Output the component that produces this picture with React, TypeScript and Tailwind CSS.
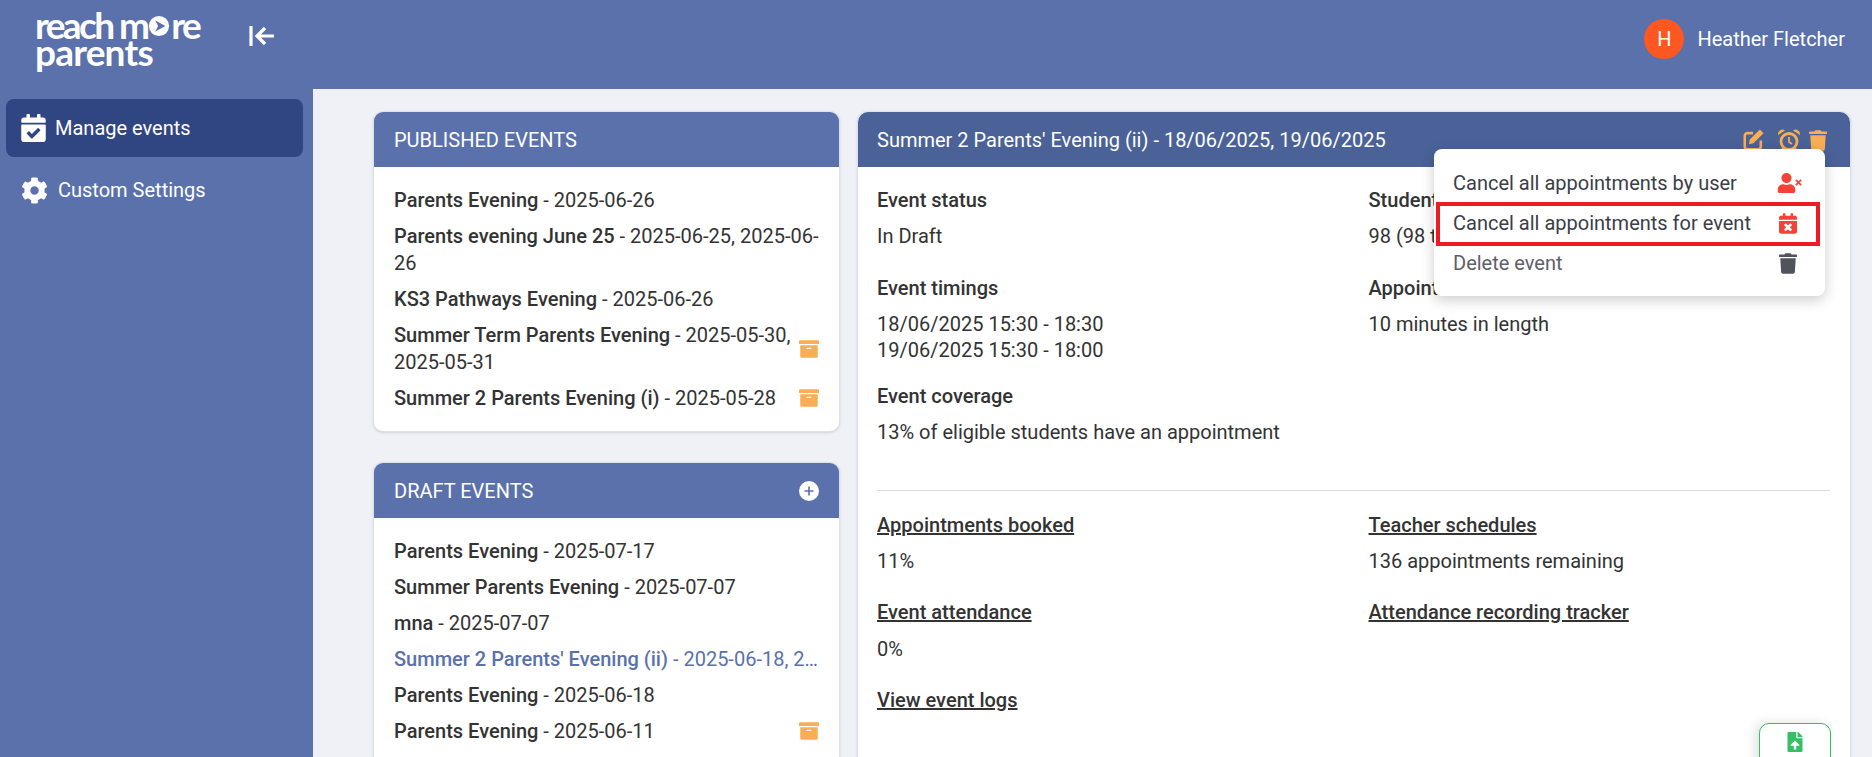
import { ReactNode } from "react";
import { FaArchive, FaCalendarCheck, FaCalendarTimes, FaCog, FaFileUpload, FaTrash, FaUser } from "react-icons/fa";

interface EventRow {
  name: string;
  dates: string;
  archived?: boolean;
  active?: boolean;
}

const published: EventRow[] = [
  { name: "Parents Evening", dates: "2025-06-26" },
  { name: "Parents evening June 25", dates: "2025-06-25, 2025-06-26" },
  { name: "KS3 Pathways Evening", dates: "2025-06-26" },
  { name: "Summer Term Parents Evening", dates: "2025-05-30, 2025-05-31", archived: true },
  { name: "Summer 2 Parents Evening (i)", dates: "2025-05-28", archived: true },
];

const drafts: EventRow[] = [
  { name: "Parents Evening", dates: "2025-07-17" },
  { name: "Summer Parents Evening", dates: "2025-07-07" },
  { name: "mna", dates: "2025-07-07" },
  { name: "Summer 2 Parents' Evening (ii)", dates: "2025-06-18, 2025-06-19", active: true },
  { name: "Parents Evening", dates: "2025-06-18" },
  { name: "Parents Evening", dates: "2025-06-11", archived: true },
];

function Logo() {
  return (
    <div className="text-white font-bold text-[37px] leading-[27px] [font-family:Lato,sans-serif]">
      <div className="flex items-end tracking-[-2.6px]">
        reach m
        <svg viewBox="0 0 24 24" className="w-[22px] h-[22px] mb-[1px] mx-[1px] shrink-0">
          <path
            fillRule="evenodd"
            fill="#fff"
            d="M12 1a11 11 0 1 0 0 22a11 11 0 0 0 0-22zM8 6l11 6l-11 6l3-6z"
          />
        </svg>
        re
      </div>
      <div className="tracking-[-0.8px]">parents</div>
    </div>
  );
}

function EditIcon() {
  return (
    <svg viewBox="0 0 24 24" className="w-[22px] h-[22px]" fill="none" stroke="currentColor" strokeWidth="2.8">
      <path d="M12 4.5H6a3 3 0 0 0-3 3V19a3 3 0 0 0 3 3h11.5a3 3 0 0 0 3-3v-6.5" />
      <path fill="currentColor" stroke="none" d="M19.5 0.5l4 4L12.5 15.5l-5 1l1-5z" />
    </svg>
  );
}

function AlarmIcon() {
  return (
    <svg viewBox="0 0 24 24" className="w-6 h-6" fill="none" stroke="currentColor">
      <circle cx="12" cy="13.5" r="8" strokeWidth="2.8" />
      <path strokeWidth="1.8" d="M12 9v5l3 2" />
      <path fill="currentColor" stroke="none" d="M1 7a4.5 4.5 0 0 1 7-4.5zM23 7a4.5 4.5 0 0 0-7-4.5z" />
      <path strokeWidth="2.4" d="M6.5 20l-2 3M17.5 20l2 3" />
    </svg>
  );
}

function PlusIcon() {
  return (
    <svg viewBox="0 0 20 20" className="w-5 h-5">
      <circle cx="10" cy="10" r="10" fill="#fff" />
      <path d="M10 5.5v9M5.5 10h9" stroke="#5a71ac" strokeWidth="1.6" />
    </svg>
  );
}

function UserCancelIcon() {
  return (
    <span className="relative w-[25px] h-5">
      <FaUser className="w-[19px] h-[20px] text-[#f44336]" />
      <svg viewBox="0 0 8 8" className="absolute right-0 top-[6px] w-[7px] h-[7px]" stroke="#f44336" strokeWidth="2">
        <path d="M1 1l6 6M7 1l-6 6" />
      </svg>
    </span>
  );
}

function EventList({ rows }: { rows: EventRow[] }) {
  return (
    <div className="px-5 py-[15px]">
      {rows.map((row, i) => (
        <div
          key={i}
          className={`flex items-center justify-between gap-2 py-[4.5px] ${row.active ? "text-[#5a71ac]" : "text-[#333333]"}`}
        >
          <div className={row.active ? "truncate" : ""}>
            <span className="font-medium">{row.name}</span> - {row.dates}
          </div>
          {row.archived && <FaArchive className="w-5 h-5 shrink-0 text-[#f9ad55]" />}
        </div>
      ))}
    </div>
  );
}

function Card({ children }: { children: ReactNode }) {
  return (
    <div className="shrink-0 bg-white rounded-[10px] border border-[#dfe1e8] overflow-hidden shadow-sm">{children}</div>
  );
}

function Field({ label, children, className = "" }: { label: string; children?: ReactNode; className?: string }) {
  return (
    <div className={className}>
      <div className="font-medium">{label}</div>
      {children && <div className="mt-[9px]">{children}</div>}
    </div>
  );
}

function LinkField({ label, children }: { label: string; children?: ReactNode }) {
  return (
    <div>
      <div className="font-medium underline">{label}</div>
      {children && <div className="mt-[9px]">{children}</div>}
    </div>
  );
}

function ActionsMenu() {
  return (
    <div className="absolute left-[576px] top-[37px] w-[391px] h-[147px] bg-white rounded-lg shadow-[0_4px_14px_rgba(0,0,0,0.2)] py-[14px] text-[#3b3e47]">
      <div className="flex items-center justify-between h-10 pl-[19px] pr-[23px]">
        Cancel all appointments by user
        <UserCancelIcon />
      </div>
      <div className="flex items-center justify-between h-10 pl-[19px] pr-[28px]">
        Cancel all appointments for event
        <FaCalendarTimes className="w-[18px] h-[21px] text-[#f44336]" />
      </div>
      <div className="flex items-center justify-between h-10 pl-[19px] pr-[28px] text-[#5d6068]">
        Delete event
        <FaTrash className="w-[18px] h-[21px] text-[#50525c]" />
      </div>
      {/* red annotation box from the screenshot */}
      <div className="absolute left-[2px] top-[53px] w-[384px] h-[44px] border-4 border-[#ed1c24]" />
    </div>
  );
}

export default function App() {
  return (
    <div className="h-[757px] overflow-hidden flex flex-col bg-[#f0f1f6] text-[20px] leading-[27px] [font-family:Roboto,sans-serif]">
      <header className="h-[89px] shrink-0 bg-[#5a71ac] flex justify-between pr-[27px]">
        <div className="flex items-start">
          <div className="ml-[35px] mt-[11px] w-[214px]">
            <Logo />
          </div>
          <svg viewBox="0 0 26 22" className="mt-[25px] w-[26px] h-[22px]" fill="none" stroke="#fff" strokeWidth="3.2">
            <path d="M2 1v20" />
            <path d="M25 11H9M16 3l-8 8l8 8" />
          </svg>
        </div>
        <div className="flex items-center gap-[13px] pb-[11px] text-white">
          <div className="w-10 h-10 rounded-full bg-[#ff5722] flex items-center justify-center">H</div>
          Heather Fletcher
        </div>
      </header>

      <div className="flex flex-1 min-h-0">
        <aside className="w-[313px] shrink-0 bg-[#5a71ac] text-white pl-[6px] pr-[10px] pt-[10px]">
          <div className="h-[58px] flex items-center gap-[9px] pl-[15px] bg-[#304683] rounded-lg">
            <FaCalendarCheck className="w-[25px] h-[28px]" />
            Manage events
          </div>
          <div className="h-[58px] mt-[4px] flex items-center gap-[10px] pl-[15px]">
            <FaCog className="w-[27px] h-[27px]" />
            Custom Settings
          </div>
        </aside>

        <main className="flex-1 min-w-0 flex gap-[17px] pt-[22px] pl-[60px] pr-[21px]">
          <div className="w-[467px] shrink-0 flex flex-col gap-[30px]">
            <Card>
              <div className="h-[55px] bg-[#5a71ac] text-white flex items-center px-5 pt-px">PUBLISHED EVENTS</div>
              <EventList rows={published} />
            </Card>
            <Card>
              <div className="h-[55px] bg-[#5a71ac] text-white flex items-center justify-between px-5 pt-px">
                DRAFT EVENTS
                <PlusIcon />
              </div>
              <EventList rows={drafts} />
            </Card>
          </div>

          <div className="relative flex-1 min-w-0 self-start h-[800px] bg-white rounded-[10px] border border-[#dfe1e8] shadow-sm text-[#333333]">
            <div className="h-[55px] bg-[#4a6298] rounded-t-[10px] text-white flex items-center justify-between pl-[19px] pr-[23px] pt-px">
              Summer 2 Parents' Evening (ii) - 18/06/2025, 19/06/2025
              <div className="flex items-center gap-[10px] text-[#f9ad55]">
                <EditIcon />
                <span className="ml-[3px] -mr-[2px]">
                  <AlarmIcon />
                </span>
                <FaTrash className="w-[18px] h-[21px]" />
              </div>
            </div>

            <div className="pl-[19px] pr-5 pt-5">
              <div className="grid grid-cols-2 gap-x-[30px]">
                <div>
                  <Field label="Event status">In Draft</Field>
                  <Field label="Event timings" className="mt-[25px]">
                    <div className="leading-[26px]">
                      18/06/2025 15:30 - 18:30
                      <br />
                      19/06/2025 15:30 - 18:00
                    </div>
                  </Field>
                  <Field label="Event coverage" className="mt-5">
                    13% of eligible students have an appointment
                  </Field>
                </div>
                <div>
                  <Field label="Students">98 (98 total)</Field>
                  <Field label="Appointments" className="mt-[25px]">
                    10 minutes in length
                  </Field>
                </div>
              </div>

              <div className="mt-[44px] border-t border-[#d9dbe2]" />

              <div className="grid grid-cols-2 gap-x-[30px] mt-[21px]">
                <LinkField label="Appointments booked">11%</LinkField>
                <LinkField label="Teacher schedules">136 appointments remaining</LinkField>
              </div>
              <div className="grid grid-cols-2 gap-x-[30px] mt-6">
                <LinkField label="Event attendance">
                  <div className="pt-px">0%</div>
                </LinkField>
                <LinkField label="Attendance recording tracker" />
              </div>
              <div className="mt-6">
                <LinkField label="View event logs" />
              </div>
            </div>

            <ActionsMenu />

            <div className="absolute left-[901px] top-[611px] w-[72px] h-[60px] bg-white border border-[#34c164] rounded-t-[10px] shadow-[-4px_0_12px_rgba(0,0,0,0.12)] flex justify-center pt-[8px]">
              <FaFileUpload className="w-[16px] h-[20px] text-[#34c164]" />
            </div>
          </div>
        </main>
      </div>
    </div>
  );
}
